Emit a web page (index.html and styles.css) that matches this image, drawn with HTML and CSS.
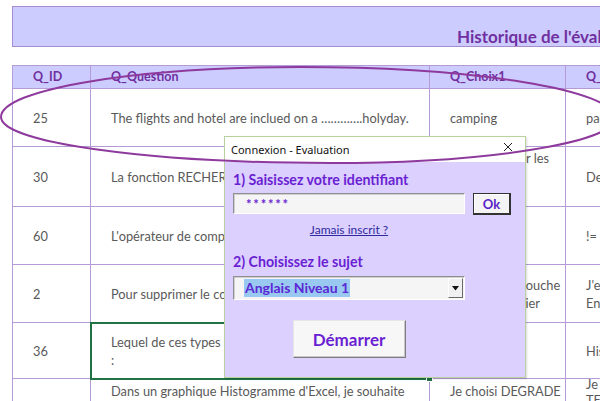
FILE: index.html
```html
<!DOCTYPE html>
<html lang="fr">
<head>
<meta charset="utf-8">
<title>Historique de l'évaluation</title>
<link rel="stylesheet" href="styles.css">
</head>
<body>
<div class="sheet">
  <div class="banner"><span class="banner-title">Historique de l'évaluation des stagiaires</span></div>
  <table class="grid">
    <colgroup>
      <col class="c-id"><col class="c-q"><col class="c-c1"><col class="c-c2">
    </colgroup>
    <thead>
      <tr class="head"><th>Q_ID</th><th>Q_Question</th><th>Q_Choix1</th><th>Q_Choix2</th></tr>
    </thead>
    <tbody>
      <tr class="row"><td>25</td><td>The flights and hotel are inclued on a ………….holyday.</td><td>camping</td><td>package</td></tr>
      <tr class="row"><td>30</td><td>La fonction RECHERCHEV permet de :</td><td class="top">Chercher pour les<br>données</td><td>Des valeurs</td></tr>
      <tr class="row"><td>60</td><td>L'opérateur de comparaison différent s'écrit :</td><td>&lt;&gt;</td><td>!=</td></tr>
      <tr class="row"><td>2</td><td>Pour supprimer le contenu d'une cellule :</td><td>Appuyer sur touche<br>Suppr du clavier</td><td>J'enlève<br>Entrée</td></tr>
      <tr class="row r36"><td>36</td><td class="selected">Lequel de ces types n'est pas un graphique<br>:<span class="handle"></span></td><td>Secteur</td><td>Histogramme</td></tr>
      <tr class="row last"><td></td><td>Dans un graphique Histogramme d'Excel, je souhaite<br>appliquer un effet de remplissage :</td><td>Je choisi DEGRADE<br>dans le menu</td><td><div class="shift">Je choisi<br>TEXTURE<br>dans le menu</div></td></tr>
    </tbody>
  </table>
</div>

<div class="dialog">
  <div class="dlg-title">
    <span class="dlg-caption">Connexion - Evaluation</span>
    <svg class="dlg-close" width="10" height="10" viewBox="0 0 10 10"><path d="M1 1L9 9M9 1L1 9" stroke="#222" stroke-width="1" fill="none"/></svg>
  </div>
  <div class="dlg-body">
    <div class="dlg-col">
      <div class="dlg-label">1) Saisissez votre identifiant</div>
      <div class="id-row">
        <div class="field pwd">******</div>
        <div class="btn-ok">Ok</div>
      </div>
      <div class="link">Jamais inscrit ?</div>
      <div class="dlg-label second">2) Choisissez le sujet</div>
      <div class="combo">
        <span class="combo-value">Anglais Niveau 1</span>
        <span class="combo-btn"><svg width="7" height="5" viewBox="0 0 7 5"><path d="M0 0H7L3.5 4.5Z" fill="#111"/></svg></span>
      </div>
      <div class="btn-start">Démarrer</div>
    </div>
  </div>
</div>

<svg class="ring" width="600" height="401" viewBox="0 0 600 401">
  <path d="M1 117 C1 89.4 135 67 300 67 C474 67 615 89.8 615 118 C615 142.9 487 163 330 163 C148 163 1 142.4 1 117 Z" fill="none" stroke="#8e3a9d" stroke-width="2"/>
</svg>
</body>
</html>
```

FILE: styles.css
```css
html, body {
  margin: 0;
  padding: 0;
  background: #ffffff;
}

body {
  width: 600px;
  height: 401px;
  overflow: hidden;
  position: relative;
  font-family: "Lato", "Open Sans", sans-serif;
}

.sheet {
  padding-top: 6px;
}

.banner {
  margin-left: 12px;
  width: 700px;
  height: 39px;
  border: 1px solid #a68bd0;
  background: #ccccff;
  display: flex;
  align-items: flex-end;
  padding-left: 444px;
  box-sizing: content-box;
}

.banner-title {
  font-weight: 700;
  font-size: 17px;
  line-height: 18px;
  color: #7030a0;
  white-space: nowrap;
}

.grid {
  margin-top: 18px;
  margin-left: 12px;
  border-collapse: collapse;
  table-layout: fixed;
  width: 693px;
  font-size: 12.8px;
  color: #595959;
}

.c-id { width: 78px; }
.c-q { width: 339px; }
.c-c1 { width: 136px; }
.c-c2 { width: 140px; }

.grid th,
.grid td {
  border: 1px solid #b49bd6;
  padding: 0 6px 0 20px;
  text-align: left;
  vertical-align: middle;
  white-space: nowrap;
  overflow: hidden;
  line-height: 18px;
}

.grid .head th {
  height: 20px;
  background: #ccccff;
  color: #7030a0;
  font-weight: 700;
  font-size: 12.5px;
  vertical-align: bottom;
  padding-bottom: 2px;
}

.grid .row td {
  height: 57px;
}

.grid .row td.top {
  vertical-align: top;
  padding-top: 2px;
}

.grid .r36 td {
  height: 55px;
}

.grid .last td {
  height: 40px;
  vertical-align: top;
  padding-top: 3px;
}

.grid .last td:last-child {
  padding-top: 0;
  line-height: 16px;
}

.shift {
  margin-top: -3px;
}

.grid td.selected {
  position: relative;
  overflow: visible;
  outline: 2px solid #217346;
  outline-offset: -1px;
}

.handle {
  position: absolute;
  right: -4px;
  bottom: -4px;
  width: 5px;
  height: 5px;
  background: #217346;
  border: 1px solid #ffffff;
}

/* Dialog */
.dialog {
  position: absolute;
  left: 224px;
  top: 136px;
  width: 300px;
  height: 240px;
  border: 1px solid #b9d19c;
  background: #dcd0ff;
  box-shadow: 1px 1px 2px rgba(0, 0, 0, 0.15);
  display: flex;
  flex-direction: column;
}

.dlg-title {
  height: 25px;
  background: #ffffff;
  display: flex;
  align-items: center;
  justify-content: space-between;
  padding: 0 12px 0 6px;
}

.dlg-caption {
  font-family: "Noto Sans", "Open Sans", sans-serif;
  font-size: 11px;
  color: #111111;
}

.dlg-close {
  display: block;
  margin-top: -5px;
}

.dlg-body {
  flex: 1;
  padding: 9px 0 0 8px;
}

.dlg-col {
  width: 232px;
  display: flex;
  flex-direction: column;
  align-items: stretch;
}

.dlg-label {
  font-weight: 700;
  font-size: 14.2px;
  line-height: 18px;
  color: #6a1fd2;
  white-space: nowrap;
}

.dlg-label.second {
  margin-top: 15px;
}

.id-row {
  margin-top: 4px;
  display: flex;
  width: 278px;
}

.field {
  width: 232px;
  height: 21px;
  box-sizing: border-box;
  background: #f5f5f5;
  border: 1px solid;
  border-color: #8f8f8f #ffffff #ffffff #8f8f8f;
  box-shadow: inset 1px 1px 0 #d0d0d0;
}

.pwd {
  padding-left: 12px;
  font-size: 13px;
  font-weight: 700;
  line-height: 21px;
  color: #6a1fd2;
  letter-spacing: 1.8px;
}

.btn-ok {
  margin-left: 8px;
  width: 38px;
  height: 22px;
  box-sizing: border-box;
  background: #f4f4f4;
  border: 1px solid #333333;
  border-width: 1px 2px 2px 1px;
  box-shadow: inset 1px 1px 0 #ffffff;
  font-weight: 700;
  font-size: 13px;
  color: #5a1fc8;
  display: flex;
  align-items: center;
  justify-content: center;
}

.link {
  margin-top: 7px;
  height: 16px;
  line-height: 16px;
  text-align: center;
  font-size: 12px;
  color: #2f2a9e;
  text-decoration: underline;
}

.combo {
  margin-top: 5px;
  height: 24px;
  box-sizing: border-box;
  background: #f5f5f5;
  border: 1px solid;
  border-color: #8f8f8f #ffffff #ffffff #8f8f8f;
  box-shadow: inset 1px 1px 0 #d0d0d0;
  display: flex;
  align-items: center;
  justify-content: space-between;
  padding: 0 1px 0 10px;
}

.combo-value {
  background: #99c8f0;
  font-weight: 700;
  font-size: 14px;
  line-height: 18px;
  color: #5b28d4;
  padding: 0 1px;
}

.combo-btn {
  width: 15px;
  height: 20px;
  box-sizing: border-box;
  background: #f0f0f0;
  border: 1px solid;
  border-color: #ffffff #6a6a6a #6a6a6a #ffffff;
  display: flex;
  align-items: center;
  justify-content: center;
}

.btn-start {
  margin: 20px auto 0;
  width: 113px;
  height: 38px;
  box-sizing: border-box;
  background: #f7f7f7;
  border: 1px solid;
  border-color: #e6e6e6 #7d7d7d #7d7d7d #e6e6e6;
  box-shadow: inset -1px -1px 0 #c8c8c8;
  font-weight: 700;
  font-size: 17px;
  color: #6a1fd2;
  display: flex;
  align-items: center;
  justify-content: center;
}

/* Annotation ring */
.ring {
  position: absolute;
  left: 0;
  top: 0;
  pointer-events: none;
  overflow: visible;
}
```
